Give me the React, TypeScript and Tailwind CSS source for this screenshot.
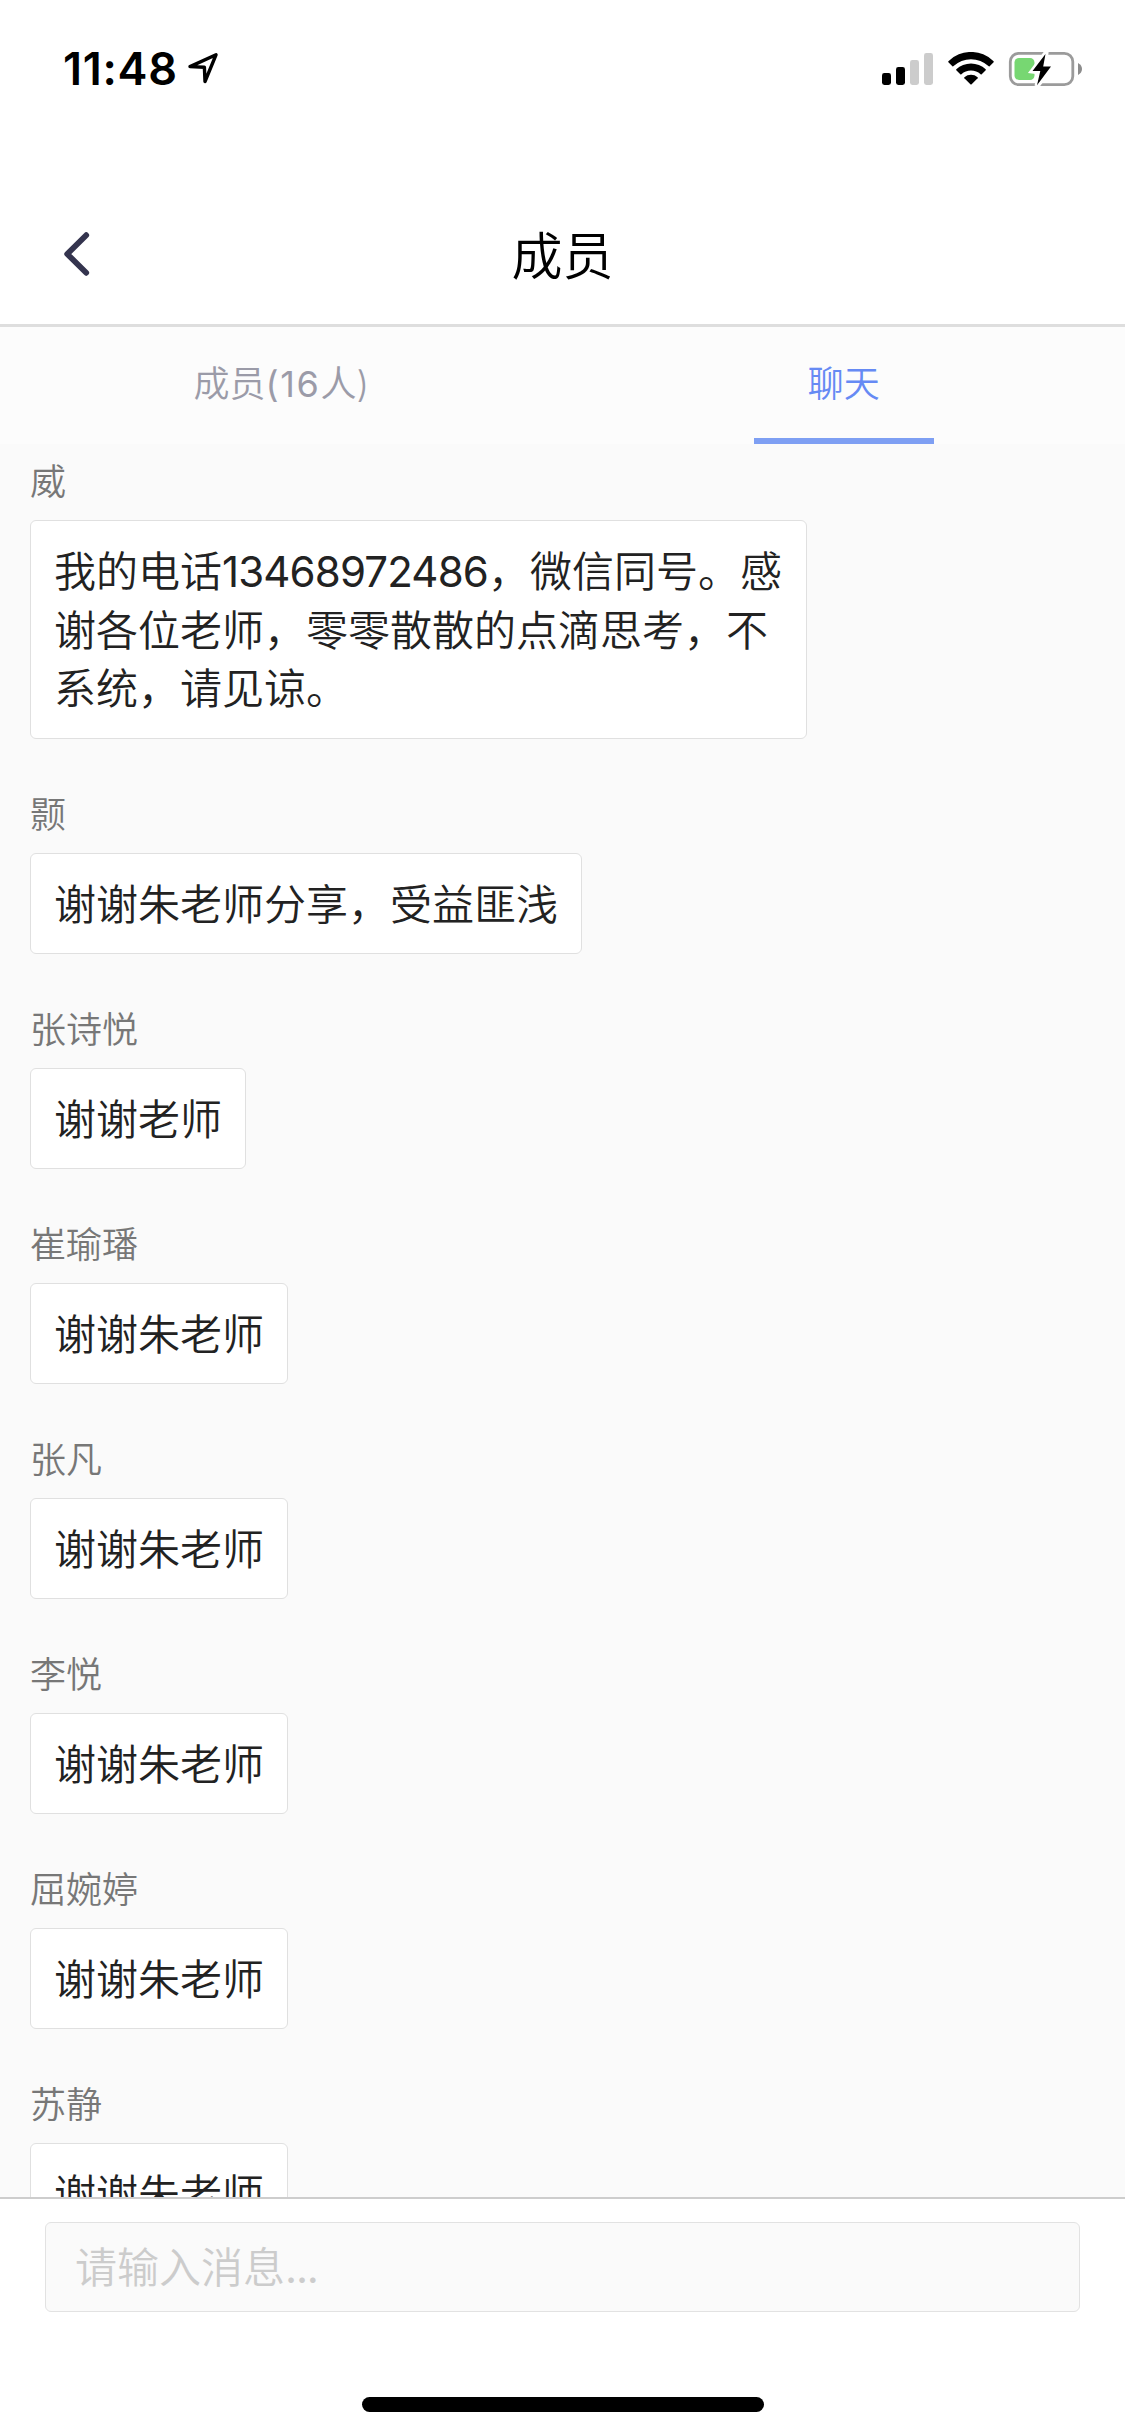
type Message = { name: string; text: string; phone?: string; rest?: string };

const messages: Message[] = [
  { name: "威", text: "我的电话", phone: "13468972486", rest: "，微信同号。感谢各位老师，零零散散的点滴思考，不系统，请见谅。" },
  { name: "颢", text: "谢谢朱老师分享，受益匪浅" },
  { name: "张诗悦", text: "谢谢老师" },
  { name: "崔瑜璠", text: "谢谢朱老师" },
  { name: "张凡", text: "谢谢朱老师" },
  { name: "李悦", text: "谢谢朱老师" },
  { name: "屈婉婷", text: "谢谢朱老师" },
  { name: "苏静", text: "谢谢朱老师" },
];

function StatusBar() {
  return (
    <div className="flex h-[132px] shrink-0 items-start justify-between pl-[63px] pr-[42px] pt-[45px]">
      <div className="flex items-center">
        <span className="w-[114px] whitespace-nowrap text-[45px] font-semibold leading-[48px] tracking-[0.7px] text-black">11:48</span>
        <svg className="ml-[10px] mb-[2px] h-[32px] w-[33px]" viewBox="0 0 33 32" fill="none">
          <path d="M3 14.6 L29 2.8 L18 29.5 L17.4 15.2 Z" stroke="#000" strokeWidth="3.4" strokeLinejoin="round" />
        </svg>
      </div>
      <div className="mt-[5px] flex items-start">
        <svg className="mt-[3px] h-[32px] w-[51px]" viewBox="0 0 51 32">
          <rect x="0" y="20" width="9" height="12" rx="2.4" fill="#000" />
          <rect x="14" y="14" width="9" height="18" rx="2.4" fill="#000" />
          <rect x="28" y="7" width="9" height="25" rx="2.4" fill="#ccc" />
          <rect x="42" y="0" width="9" height="32" rx="2.4" fill="#ccc" />
        </svg>
        <svg className="ml-[15px] mt-[2px] h-[33px] w-[46px]" viewBox="0 0 46 33">
          <path d="M0.4 9.2 A32.2 32.2 0 0 1 45.6 9.2 Q46 9.8 45.6 10.3 L41.6 14.2 Q41 14.6 40.4 14.1 A25.2 25.2 0 0 0 5.6 14.1 Q5 14.6 4.4 14.2 L0.4 10.3 Q0 9.8 0.4 9.2 Z" />
          <path d="M8.3 17.3 A21.2 21.2 0 0 1 37.7 17.3 Q38.1 17.8 37.7 18.3 L33.7 22.2 Q33.2 22.6 32.6 22.2 A14.2 14.2 0 0 0 13.4 22.2 Q12.8 22.6 12.3 22.2 L8.3 18.3 Q7.9 17.8 8.3 17.3 Z" />
          <path d="M16.4 25.2 A10.2 10.2 0 0 1 29.6 25.2 Q30.1 25.7 29.6 26.3 L23.6 32.2 Q23 32.7 22.4 32.2 L16.4 26.3 Q15.9 25.7 16.4 25.2 Z" />
        </svg>
        <svg className="ml-[14px] h-[38px] w-[75px]" viewBox="0 0 75 38">
          <rect x="2.3" y="3.3" width="62.5" height="31.4" rx="8.5" fill="#fff" stroke="#9b9b9b" strokeWidth="2.8" />
          <path d="M70 13 Q74 15.2 74 19 Q74 22.8 70 25 Z" fill="#8c8c8c" />
          <rect x="6.5" y="8" width="20" height="22" rx="4.5" fill="#77d772" />
          <path d="M38 3 L24.5 21 L32 22 L29 36 L44 17 L36.5 16 Z" fill="#fff" stroke="#fff" strokeWidth="5" />
          <path d="M37.5 4 L24.5 21 L32.3 21 L29 35.2 L43 16.5 L35.2 16.5 Z" fill="#000" />
        </svg>
      </div>
    </div>
  );
}

function Header() {
  return (
    <header className="grid h-[195px] shrink-0 grid-cols-[1fr_auto_1fr] items-center border-b-[3px] border-[#dedede] pt-[52px]">
      <svg className="ml-[62px] h-[48px] w-[30px]" viewBox="0 0 30 48" fill="none">
        <path d="M24.2 5.2 L5.2 24 L24.2 42.8" stroke="#34344e" strokeWidth="5.8" strokeLinecap="round" strokeLinejoin="round" />
      </svg>
      <h1 className="mt-[5px] text-[51px] font-[350] leading-[60px] text-black">成员</h1>
      <span />
    </header>
  );
}

function Tabs() {
  return (
    <nav className="grid h-[117px] shrink-0 grid-cols-2 bg-[#fcfcfc] text-[36px] leading-[50px]">
      <div className="flex flex-col items-center pt-[32px] text-[#9b9ba8]">
        <span className="whitespace-nowrap">成员<span className="font-normal tracking-[1.6px]">(16</span>人)</span>
      </div>
      <div className="flex flex-col items-center justify-between pt-[32px] text-[#668af4]">
        <span>聊天</span>
        <span className="h-[6px] w-[180px] bg-[#7e9ff3]" />
      </div>
    </nav>
  );
}

function MessageItem({ name, text, phone, rest }: Message) {
  return (
    <li className="flex flex-col items-start">
      <span className="mb-[13px] h-[51px] pt-px text-[36px] leading-[50px] text-[#777]">{name}</span>
      <div className={`flex items-center rounded-[6px] border border-[#e0e0e0] bg-white px-[23px] pt-[3px] text-[42px] leading-[58.4px] text-[#222] ${phone ? "h-[219px] w-[777px]" : "h-[101px]"}`}>
        <p>
          {text}
          {phone && <span className="font-normal tracking-[-0.85px]">{phone}</span>}
          {rest}
        </p>
      </div>
    </li>
  );
}

export default function App() {
  return (
    <div className="flex h-[2436px] w-[1125px] flex-col overflow-hidden bg-white font-['Inter','Noto_Sans_CJK_SC',sans-serif] font-[350]">
      <StatusBar />
      <Header />
      <Tabs />
      <ul className="flex min-h-0 flex-1 flex-col gap-[50px] overflow-hidden bg-[#fafafa] px-[30px] pt-[12px]">
        {messages.map((m) => (
          <MessageItem key={m.name} {...m} />
        ))}
      </ul>
      <footer className="flex h-[239px] shrink-0 flex-col items-center justify-between border-t-2 border-[#cdcdcd] px-[45px] pb-[24px] pt-[23px]">
        <div className="flex h-[90px] w-full items-center rounded-[6px] border border-[#e2e2e2] bg-[#fafafa] pl-[29px] pt-px text-[42px] leading-[58px] text-[#ccc]">
          请输入消息<span className="font-normal tracking-[-1.2px]">...</span>
        </div>
        <div className="h-[15px] w-[402px] rounded-full bg-black" />
      </footer>
    </div>
  );
}
